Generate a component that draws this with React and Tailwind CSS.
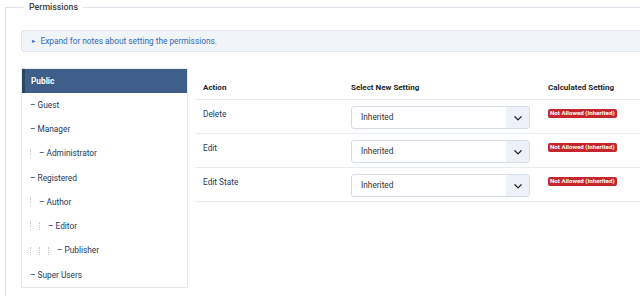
import React from "react";

const groups = [
  { name: "Guest", level: 0 },
  { name: "Manager", level: 0 },
  { name: "Administrator", level: 1 },
  { name: "Registered", level: 0 },
  { name: "Author", level: 1 },
  { name: "Editor", level: 2 },
  { name: "Publisher", level: 3 },
  { name: "Super Users", level: 0 },
];

const actions = ["Delete", "Edit", "Edit State"];

function Chevron() {
  return (
    <svg width="10" height="10" viewBox="0 0 16 16" fill="none">
      <path d="M3 6l5 5 5-5" stroke="#22262b" strokeWidth="2" strokeLinecap="round" strokeLinejoin="round" />
    </svg>
  );
}

function ActionRow({ label }) {
  return (
    <div className="flex h-[34px] border-b border-[#e8ebf0]">
      <div className="w-[156px] pl-[8px] pt-[8px] text-[8.3px] text-[#22385a]">{label}</div>
      <div className="w-[197px] pt-[6px]">
        <div className="flex h-[23px] w-[179px] items-stretch overflow-hidden rounded-[3px] border border-[#d6dce5] bg-white">
          <div className="flex flex-1 items-center pl-[9px] text-[8.3px] text-[#333]">Inherited</div>
          <div className="flex w-[23px] items-center justify-center bg-[#eef2f8]">
            <Chevron />
          </div>
        </div>
      </div>
      <div className="flex items-start pt-[9px]">
        <span className="block rounded-[2px] bg-[#c6262b] px-[2px] text-[6.2px] font-bold leading-[9px] text-white">
          Not Allowed (Inherited)
        </span>
      </div>
    </div>
  );
}

export default function App() {
  return (
    <div className="h-[296px] w-[640px] overflow-hidden bg-white" style={{ fontFamily: "Roboto, 'Noto Sans', sans-serif" }}>
      <fieldset className="ml-[5px] h-[320px] w-[700px] border border-[#dfe2ea] pl-[15px] pt-[16px]">
        <legend className="ml-[3px] px-[5px] text-[8.8px] font-medium leading-[14px] text-[#3d3d3d]">Permissions</legend>
        <div className="flex h-[22px] w-[700px] items-center gap-[4px] rounded-[3px] border border-[#e3e7ee] bg-[#f1f4f8] pl-[9px] text-[8.3px] text-[#2f6cb8]">
          <span className="text-[5.5px]">►</span>
          <span>Expand for notes about setting the permissions.</span>
        </div>
        <div className="mt-[16px] flex">
          <div className="w-[167px] border border-[#e6e9ee]">
            <div className="flex h-[24px] items-center border-l-[3px] border-[#2b4566] bg-[#3d5f8a] pl-[6px] text-[8.3px] font-bold text-white">
              Public
            </div>
            {groups.map((g) => (
              <div key={g.name} className="flex h-[24.25px] items-center pl-[8px] text-[8.3px] text-[#22385a]">
                {Array.from({ length: g.level }).map((_, i) => (
                  <span key={i} className="flex w-[9px] items-center">
                    <span className="block h-[8px] border-l-[1.5px] border-dotted border-[#c4c8ce]" />
                  </span>
                ))}
                <span>– {g.name}</span>
              </div>
            ))}
          </div>
          <div className="ml-[7px] w-[470px]">
            <div className="flex h-[32px] items-end border-b border-[#e8ebf0] pb-[5px] text-[8px] font-bold text-[#22262b]">
              <div className="w-[156px] pl-[8px]">Action</div>
              <div className="w-[197px]">Select New Setting</div>
              <div>Calculated Setting</div>
            </div>
            {actions.map((a) => (
              <ActionRow key={a} label={a} />
            ))}
          </div>
        </div>
      </fieldset>
    </div>
  );
}
